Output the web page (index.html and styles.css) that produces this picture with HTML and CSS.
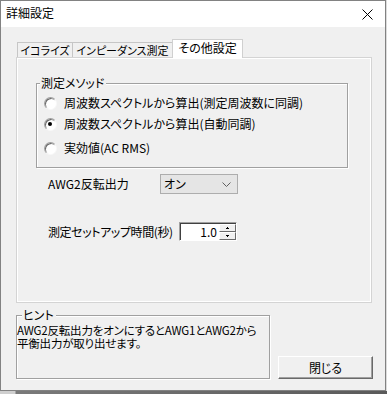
FILE: index.html
```html
<!DOCTYPE html>
<html lang="ja">
<head>
<meta charset="utf-8">
<title>詳細設定</title>
<link rel="stylesheet" href="styles.css">
</head>
<body>
<div class="screen">
  <div class="window">
    <div class="titlebar">
      <span class="title">詳細設定</span>
      <svg class="close" width="11" height="11" viewBox="0 0 11 11"><path d="M0.5 0.5 L10.5 10.5 M10.5 0.5 L0.5 10.5" stroke="#000" stroke-width="1" fill="none"/></svg>
    </div>
    <div class="client">
      <div class="tabs">
        <div class="tab t1">イコライズ</div>
        <div class="tab t2">インピーダンス測定</div>
        <div class="tab t3 active">その他設定</div>
      </div>
      <div class="page">
        <div class="group method">
          <span class="legend">測定メソッド</span>
          <div class="radio r1"><span class="circle"></span><span>周波数スペクトルから算出(測定周波数に同調)</span></div>
          <div class="radio r2"><span class="circle checked"></span><span>周波数スペクトルから算出(自動同調)</span></div>
          <div class="radio r3"><span class="circle"></span><span>実効値(AC RMS)</span></div>
        </div>
        <div class="row awg">
          <span class="lbl lbl-awg">AWG2反転出力</span>
          <div class="combo"><span>オン</span>
            <svg class="chev" width="9" height="5" viewBox="0 0 9 5"><path d="M0.5 0.5 L4.5 4.5 L8.5 0.5" stroke="#606060" stroke-width="1" fill="none"/></svg>
          </div>
        </div>
        <div class="row setup">
          <span class="lbl lbl-setup">測定セットアップ時間(秒)</span>
          <div class="spin">
            <span class="val">1.0</span>
            <div class="spinbtns">
              <div class="sb"><svg width="3" height="2" viewBox="0 0 3 2"><path d="M1 0 H2 V1 H3 V2 H0 V1 H1Z" fill="#000"/></svg></div>
              <div class="sb"><svg width="3" height="2" viewBox="0 0 3 2"><path d="M0 0 H3 V1 H2 V2 H1 V1 H0Z" fill="#000"/></svg></div>
            </div>
          </div>
        </div>
      </div>
      <div class="bottom">
        <div class="group hint">
          <span class="legend">ヒント</span>
          <p class="hinttext">AWG2反転出力をオンにするとAWG1とAWG2から<br>平衡出力が取り出せます。</p>
        </div>
        <div class="btn">閉じる</div>
      </div>
    </div>
  </div>
  <div class="shadow"></div>
</div>
</body>
</html>
```
FILE: styles.css
```css
html, body {
  margin: 0;
  padding: 0;
}
body {
  background: #dcdcdc;
  font-family: "Noto Sans CJK JP", "Noto Sans", sans-serif;
  font-size: 12px;
  font-feature-settings: "palt" 1;
  color: #000;
}
.screen {
  width: 387px;
  height: 394px;
  overflow: hidden;
}
.window {
  width: 386px;
  height: 391px;
  box-sizing: border-box;
  border: 1px solid #828282;
  display: flex;
  flex-direction: column;
  background: #f0f0f0;
}
.titlebar {
  height: 26px;
  background: #fff;
  display: flex;
  align-items: center;
  justify-content: space-between;
  padding: 0 12px 2px 5px;
  box-sizing: border-box;
  flex: none;
}
.title {
  font-size: 12px;
  line-height: 14px;
}
.close {
  display: block;
  margin-top: 2px;
}
.client {
  flex: 1;
  display: flex;
  flex-direction: column;
  padding: 12px 0 0 14px;
}
.tabs {
  display: flex;
  align-items: flex-end;
  height: 18px;
  margin-left: 2px;
  position: relative;
  z-index: 1;
}
.tab {
  box-sizing: border-box;
  border: 1px solid #c6c6c6;
  border-bottom: none;
  height: 15px;
  display: flex;
  align-items: center;
  justify-content: center;
  font-size: 11px;
  line-height: 12px;
  background: #f0f0f0;
  white-space: nowrap;
}
.t1 { width: 56px; }
.t2 { width: 101px; margin-left: -1px; }
.t3 {
  width: 71px;
  margin-left: -1px;
  height: 19px;
  margin-bottom: -1px;
  background: #fff;
  padding-bottom: 2px;
  border-color: #d0d0d0;
  font-size: 12px;
}
.page {
  box-sizing: border-box;
  margin-left: 1px;
  width: 356px;
  height: 246px;
  border: 1px solid #d4d4d4;
  box-shadow: inset 0 0 0 1px #fff;
  padding: 25px 0 0 19px;
  flex: none;
}
.group {
  position: relative;
  box-sizing: border-box;
  border: 1px solid #a0a0a0;
  box-shadow: inset 1px 1px 0 #fff, 1px 1px 0 #fff;
}
.legend {
  position: absolute;
  top: -8px;
  left: 3px;
  background: #f0f0f0;
  padding: 0 2px 0 1px;
  line-height: 14px;
  white-space: nowrap;
}
.method {
  width: 312px;
  height: 85px;
  padding: 11px 0 0 7px;
}
.radio {
  display: flex;
  align-items: center;
  height: 16px;
  line-height: 16px;
  white-space: nowrap;
}
.r2 { margin-top: 5px; }
.r3 { margin-top: 8px; }
.circle {
  width: 13px;
  height: 13px;
  box-sizing: border-box;
  border-radius: 50%;
  border: 1px solid;
  border-color: #a0a0a0 #f8f8f8 #f8f8f8 #a0a0a0;
  box-shadow: inset 1px 1px 0 #6a6a6a;
  background: #fff;
  margin-right: 7px;
  position: relative;
  flex: none;
}
.circle.checked::after {
  content: "";
  position: absolute;
  left: 3px;
  top: 3px;
  width: 4px;
  height: 4px;
  border-radius: 50%;
  background: #000;
}
.row {
  display: flex;
  align-items: center;
  margin-left: 12px;
}
.awg { margin-top: 6px; }
.setup { margin-top: 28px; }
.lbl {
  white-space: nowrap;
  line-height: 14px;
}
.lbl-awg { width: 112px; }
.lbl-setup { width: 131px; letter-spacing: -0.4px; }
.combo {
  box-sizing: border-box;
  width: 78px;
  height: 20px;
  border: 1px solid #adadad;
  background: #e5e5e5;
  display: flex;
  align-items: center;
  justify-content: space-between;
  padding: 0 6px 0 3px;
  line-height: 14px;
}
.chev { display: block; }
.spin {
  box-sizing: border-box;
  width: 58px;
  height: 19px;
  background: #fff;
  border-top: 1px solid #a0a0a0;
  border-left: 1px solid #a0a0a0;
  border-right: 1px solid #fff;
  border-bottom: 1px solid #fff;
  box-shadow: inset 1px 1px 0 #404040;
  display: flex;
  align-items: stretch;
  padding: 1px 0 0 1px;
}
.val {
  flex: 1;
  text-align: right;
  line-height: 16px;
  padding-right: 2px;
}
.spinbtns {
  width: 17px;
  display: flex;
  flex-direction: column;
}
.sb {
  flex: 1;
  box-sizing: border-box;
  background: #f0f0f0;
  border-top: 1px solid #fff;
  border-left: 1px solid #fff;
  border-right: 1px solid #696969;
  border-bottom: 1px solid #696969;
  display: flex;
  align-items: center;
  justify-content: center;
}
.sb svg { display: block; }
.bottom {
  margin-top: 12px;
  display: flex;
  align-items: flex-end;
  height: 64px;
  flex: none;
}
.hint {
  width: 254px;
  height: 64px;
  margin-left: 1px;
  padding: 8px 0 0 0;
}
.hint .legend { left: 5px; }
.hinttext {
  margin: 0;
  font-size: 11.5px;
  line-height: 13px;
  white-space: nowrap;
  letter-spacing: -0.2px;
}
.btn {
  box-sizing: border-box;
  width: 95px;
  height: 23px;
  margin-left: 8px;
  background: #f0f0f0;
  border-top: 1px solid #fff;
  border-left: 1px solid #fff;
  border-right: 1px solid #696969;
  border-bottom: 1px solid #696969;
  box-shadow: inset -1px -1px 0 #a0a0a0;
  display: flex;
  align-items: center;
  justify-content: center;
  line-height: 14px;
}
.shadow {
  height: 3px;
  background: linear-gradient(to right, #cfcfcf 0, #cfcfcf 15px, #7a7a7a 16px, #5a5a5a 100%);
}
```
